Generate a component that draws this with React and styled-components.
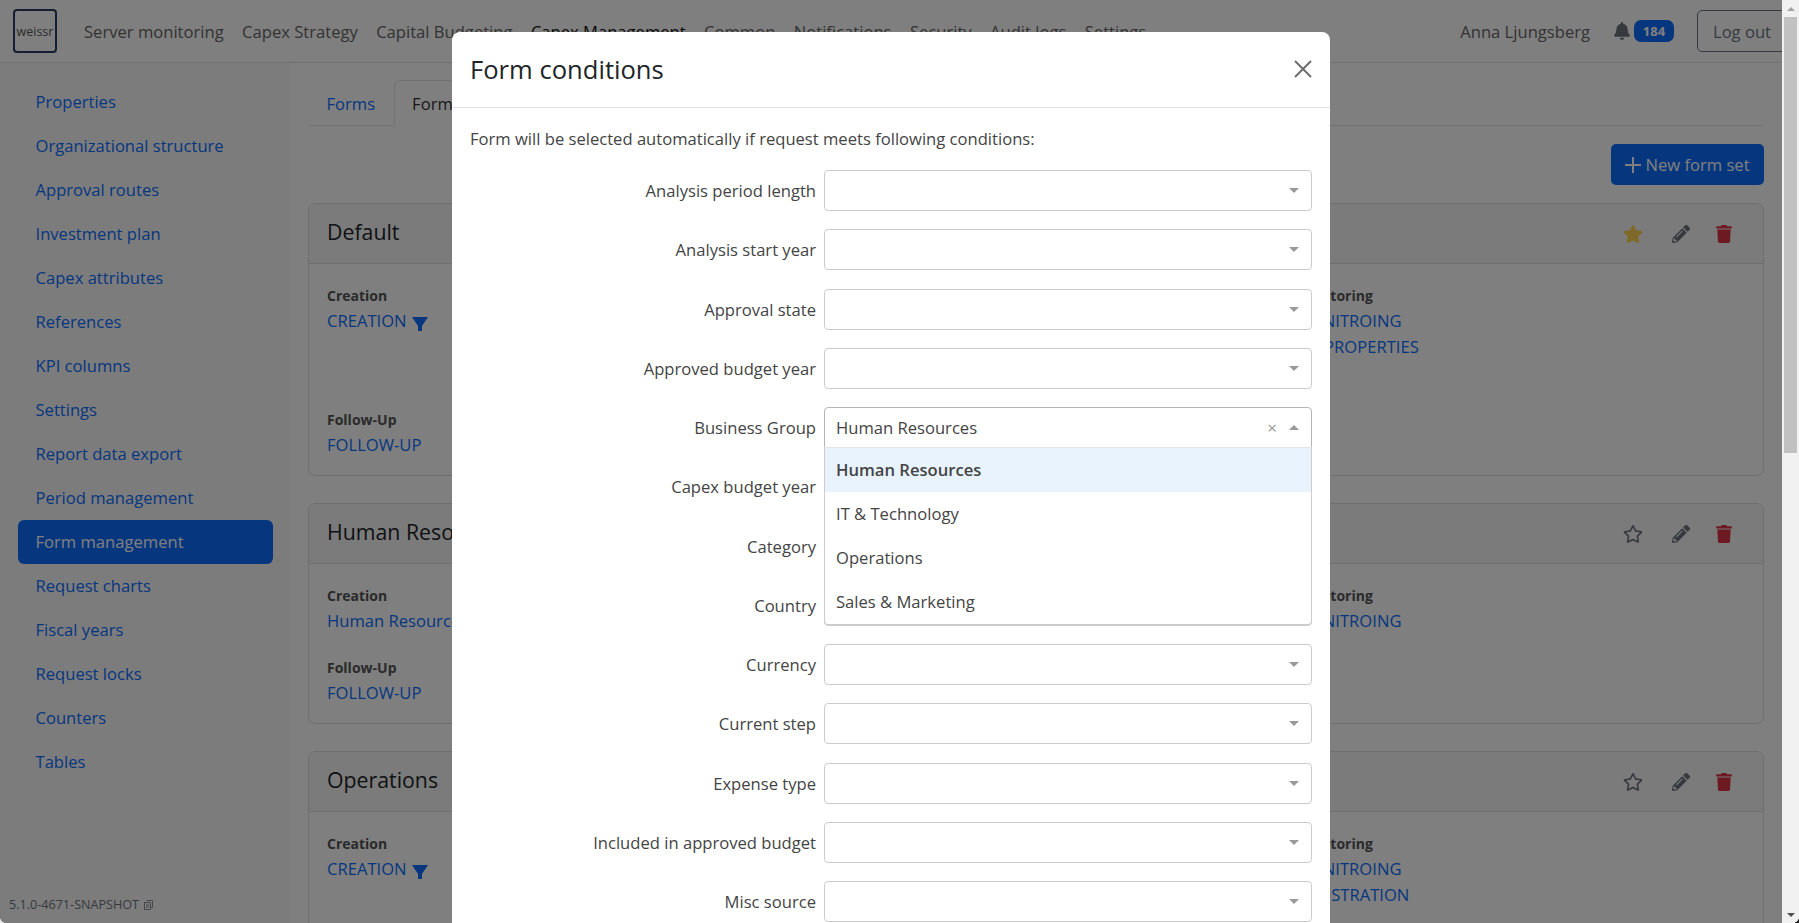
import React from 'react';
import styled, { createGlobalStyle } from 'styled-components';
import { FaBell, FaStar, FaRegStar, FaPencilAlt, FaTrash } from 'react-icons/fa';

const GlobalStyle = createGlobalStyle`
  html, body {
    margin: 0;
    height: 100%;
    overflow: hidden;
  }
  body {
    font-family: "Open Sans", "Liberation Sans", sans-serif;
    font-size: 16.6px;
    color: #212529;
    background: #fff;
  }
  * { box-sizing: border-box; }
`;

const Shell = styled.div`
  position: relative;
  display: flex;
  width: 1799px;
  height: 923px;
  overflow: hidden;
`;

const Page = styled.div`
  position: relative;
  flex: 1;
  min-width: 0;
  height: 923px;
  overflow: hidden;
  background: #fff;
`;

const Navbar = styled.nav`
  display: flex;
  align-items: center;
  height: 63px;
  padding: 0 0 0 13px;
  border-bottom: 1px solid #dee2e6;
`;

const Logo = styled.div`
  flex: 0 0 44px;
  height: 44px;
  margin-right: 27px;
  border: 2px solid #2d3c66;
  border-radius: 4px;
  font-size: 12.5px;
  display: flex;
  align-items: center;
  justify-content: center;
  color: #555;
`;

const NavLink = styled.a`
  margin-right: 18.4px;
  white-space: nowrap;
  color: ${p => (p.$active ? '#111' : '#666')};
`;

const UserBlock = styled.div`
  display: flex;
  align-items: center;
  margin-left: auto;
  margin-right: -5px;
`;

const UserName = styled.span`
  color: #666;
  margin-right: 23px;
`;

const BellIcon = styled(FaBell)`
  width: 18px;
  height: 18px;
  color: #6c757d;
  margin-right: 3px;
`;

const Badge = styled.span`
  width: 40px;
  height: 22px;
  margin-right: 23px;
  background: #0d6efd;
  border-radius: 7px;
  color: #fff;
  font-size: 13px;
  font-weight: 700;
  display: flex;
  align-items: center;
  justify-content: center;
`;

const LogoutButton = styled.button`
  width: 90px;
  height: 42px;
  padding: 0;
  background: transparent;
  border: 1px solid #6c757d;
  border-radius: 5px;
  color: #6c757d;
  font: inherit;
`;

const Columns = styled.div`
  display: flex;
  height: 860px;
`;

const Sidebar = styled.aside`
  flex: 0 0 291px;
  padding: 16.5px 18px 0 18px;
  background: #f8f9fa;
`;

const SideItem = styled.a`
  display: flex;
  align-items: center;
  height: 44px;
  padding-left: 17.5px;
  border-radius: 6px;
  color: ${p => (p.$active ? '#fff' : '#0d6efd')};
  background: ${p => (p.$active ? '#0d6efd' : 'transparent')};
`;

const Main = styled.main`
  flex: 1;
  min-width: 0;
  padding: 17px 18px 0 17px;
`;

const Tabs = styled.div`
  display: flex;
  height: 46px;
  border-bottom: 1px solid #dee2e6;
`;

const Tab = styled.a`
  height: 46px;
  padding: 0 17.5px;
  display: flex;
  align-items: center;
  color: ${p => (p.$active ? '#333' : '#0d6efd')};
  background: ${p => (p.$active ? '#fff' : 'transparent')};
  border: 1px solid ${p => (p.$active ? '#dee2e6' : 'transparent')};
  border-bottom-color: ${p => (p.$active ? '#fff' : 'transparent')};
  border-radius: 6px 6px 0 0;
`;

const Toolbar = styled.div`
  display: flex;
  justify-content: flex-end;
  padding: 18px 0;
`;

const PrimaryButton = styled.button`
  display: flex;
  align-items: center;
  gap: 4px;
  width: 153px;
  height: 41px;
  padding: 0;
  justify-content: center;
  background: #0d6efd;
  border: none;
  border-radius: 5px;
  color: #fff;
  font: inherit;
`;

const PlusIcon = styled.svg`
  width: 16px;
  height: 16px;
  stroke: #fff;
  stroke-width: 2;
`;

const Card = styled.section`
  border: 1px solid #dfdfdf;
  border-radius: 7px;
  margin-bottom: 27px;
  overflow: hidden;
`;

const CardHeader = styled.header`
  display: flex;
  align-items: center;
  height: 60px;
  padding: 0 30px 0 18px;
  background: #f7f7f7;
  border-bottom: 1px solid #dfdfdf;
`;

const CardTitle = styled.h3`
  flex: 1;
  margin: 0 0 4px;
  font-size: 21.3px;
  font-weight: 500;
`;

const CardActions = styled.div`
  display: flex;
  align-items: center;
`;

const ActionStar = styled.span`
  display: flex;
  margin-right: 29px;
  color: ${p => (p.$on ? '#ffd350' : '#6c757d')};
  font-size: 20px;
`;

const ActionPencil = styled.span`
  display: flex;
  margin-right: 25px;
  color: #6c757d;
  font-size: 18px;
`;

const ActionTrash = styled.span`
  display: flex;
  color: #dc3545;
  font-size: 18px;
`;

const CardBody = styled.div`
  display: grid;
  grid-template-columns: repeat(3, 1fr);
  grid-column-gap: 34px;
  grid-row-gap: 22px;
  padding: 20px 18px 17px 18px;
`;

const BlockLabel = styled.div`
  font-size: 14px;
  font-weight: 700;
  color: #555;
  line-height: 24px;
`;

const BlockLink = styled.a`
  display: flex;
  align-items: center;
  gap: 5px;
  line-height: 26px;
  white-space: nowrap;
  color: #0d6efd;
`;

const FunnelIcon = styled.svg`
  width: 16px;
  height: 14px;
  margin-top: 6px;
  fill: #0d6efd;
`;

const Version = styled.div`
  position: absolute;
  left: 9px;
  bottom: 10px;
  display: flex;
  align-items: center;
  gap: 5px;
  font-size: 12.6px;
  color: #6c757d;
`;

const CopyIcon = styled.svg`
  width: 9px;
  height: 10px;
  fill: none;
  stroke: #8a8f94;
  stroke-width: 1;
`;

const Backdrop = styled.div`
  position: absolute;
  inset: 0;
  background: rgba(0, 0, 0, 0.5);
`;

const Modal = styled.div`
  position: absolute;
  left: 452px;
  top: 32px;
  width: 878px;
  background: #fff;
  border-radius: 8px 8px 0 0;
`;

const ModalHeader = styled.div`
  display: flex;
  align-items: center;
  justify-content: space-between;
  height: 76px;
  padding: 0 17px 1px 18px;
  border-bottom: 1px solid #dee2e6;
`;

const ModalTitle = styled.h2`
  margin: 0;
  font-size: 25.6px;
  font-weight: 500;
  color: #212529;
`;

const CloseIcon = styled.svg`
  width: 20px;
  height: 20px;
  stroke: #6d6d6d;
  stroke-width: 2;
`;

const ModalBody = styled.div`
  padding: 18px 18px 0;
`;

const Intro = styled.p`
  margin: 0 0 18px;
  line-height: 26px;
  color: #444;
`;

const Row = styled.div`
  display: grid;
  grid-template-columns: 346px 1fr;
  grid-column-gap: 8px;
  align-items: center;
  margin-bottom: 18.25px;
`;

const RowLabel = styled.label`
  text-align: right;
  color: #444;
`;

const SelectWrap = styled.div`
  position: relative;
`;

const SelectBox = styled.div`
  display: flex;
  align-items: center;
  height: 41px;
  padding: 0 11px;
  border: 1px solid ${p => (p.$open ? '#b5b5b5' : '#ccc')};
  border-radius: ${p => (p.$open ? '4px 4px 0 0' : '4px')};
  color: #444;
`;

const SelectValue = styled.span`
  flex: 1;
`;

const ClearMark = styled.span`
  margin-right: 12px;
  font-size: 17px;
  color: #999;
`;

const Caret = styled.span`
  width: 0;
  height: 0;
  margin-right: 1px;
  border-left: 5px solid transparent;
  border-right: 5px solid transparent;
  border-top: ${p => (p.$up ? '0' : '5px solid #999')};
  border-bottom: ${p => (p.$up ? '5px solid #999' : '0')};
`;

const Dropdown = styled.div`
  position: absolute;
  left: 0;
  right: 0;
  top: 40px;
  background: #fff;
  border: 1px solid #ccc;
  border-top-color: #e6e6e6;
  border-radius: 0 0 4px 4px;
  z-index: 2;
`;

const Option = styled.div`
  display: flex;
  align-items: center;
  height: 44px;
  padding: 0 11px 1px;
  color: #444;
  font-weight: ${p => (p.$selected ? 600 : 400)};
  background: ${p => (p.$selected ? '#e8f3fd' : 'transparent')};
`;

const Scrollbar = styled.div`
  flex: 0 0 17px;
  display: flex;
  flex-direction: column;
  align-items: center;
  background: #f1f1f1;
`;

const ScrollArrow = styled.div`
  flex: 0 0 17px;
  display: flex;
  align-items: center;
  justify-content: center;
`;

const ScrollCaret = styled.span`
  width: 0;
  height: 0;
  border-left: 4px solid transparent;
  border-right: 4px solid transparent;
  border-top: ${p => (p.$up ? '0' : '4px solid #505050')};
  border-bottom: ${p => (p.$up ? '4px solid #a3a3a3' : '0')};
`;

const ScrollThumb = styled.div`
  width: 13px;
  height: 436px;
  background: #c1c1c1;
`;

const ScrollRest = styled.div`
  flex: 1;
`;

/* window corners that the screenshot caught */
const WindowCorner = styled.div`
  position: absolute;
  bottom: 0;
  ${p => (p.$right ? 'right: 0;' : 'left: 0;')}
  width: 7px;
  height: 7px;
  background: radial-gradient(circle at ${p => (p.$right ? '0 0' : '100% 0')}, transparent 7px, ${p => (p.$right ? '#222' : '#e8e8e8')} 7.5px);
`;

const navItems = ['Server monitoring', 'Capex Strategy', 'Capital Budgeting', 'Capex Management', 'Common', 'Notifications', 'Security', 'Audit logs', 'Settings'];

const sideItems = ['Properties', 'Organizational structure', 'Approval routes', 'Investment plan', 'Capex attributes', 'References', 'KPI columns', 'Settings', 'Report data export', 'Period management', 'Form management', 'Request charts', 'Fiscal years', 'Request locks', 'Counters', 'Tables'];

const cards = [
  { title: 'Default', starred: true, creation: 'CREATION', filter: true, approval: ['APPROVAL', 'BUDGET', 'KPI'], monitoring: ['MONITROING', 'KPI PROPERTIES'], followUp: 'FOLLOW-UP' },
  { title: 'Human Resources', creation: 'Human Resources', approval: ['APPROVAL'], monitoring: ['MONITROING'], followUp: 'FOLLOW-UP' },
  { title: 'Operations', creation: 'CREATION', filter: true, approval: ['APPROVAL', 'BUDGET', 'KPI'], monitoring: ['MONITROING', 'REGISTRATION'], followUp: 'FOLLOW-UP' },
];

const conditions = ['Analysis period length', 'Analysis start year', 'Approval state', 'Approved budget year', 'Business Group', 'Capex budget year', 'Category', 'Country', 'Currency', 'Current step', 'Expense type', 'Included in approved budget', 'Misc source'];

const groups = ['Human Resources', 'IT & Technology', 'Operations', 'Sales & Marketing'];

export default function App() {
  return (
    <Shell>
      <GlobalStyle />
      <Page>
        <Navbar>
          <Logo>weissr</Logo>
          {navItems.map(item => (
            <NavLink key={item} $active={item === 'Capex Management'}>{item}</NavLink>
          ))}
          <UserBlock>
            <UserName>Anna Ljungsberg</UserName>
            <BellIcon />
            <Badge>184</Badge>
            <LogoutButton>Log out</LogoutButton>
          </UserBlock>
        </Navbar>
        <Columns>
          <Sidebar>
            {sideItems.map(item => (
              <SideItem key={item} $active={item === 'Form management'}>{item}</SideItem>
            ))}
          </Sidebar>
          <Main>
            <Tabs>
              <Tab>Forms</Tab>
              <Tab $active>Form sets</Tab>
            </Tabs>
            <Toolbar>
              <PrimaryButton>
                <PlusIcon viewBox="0 0 16 16"><path d="M8 0 V16 M0 8 H16" /></PlusIcon>
                New form set
              </PrimaryButton>
            </Toolbar>
            {cards.map(card => (
              <Card key={card.title}>
                <CardHeader>
                  <CardTitle>{card.title}</CardTitle>
                  <CardActions>
                    <ActionStar $on={card.starred}>{card.starred ? <FaStar /> : <FaRegStar />}</ActionStar>
                    <ActionPencil><FaPencilAlt /></ActionPencil>
                    <ActionTrash><FaTrash /></ActionTrash>
                  </CardActions>
                </CardHeader>
                <CardBody>
                  <div>
                    <BlockLabel>Creation</BlockLabel>
                    <BlockLink>
                      {card.creation}
                      {card.filter && <FunnelIcon viewBox="0 0 16 14"><path d="M0 0 H16 L10 9 V14 H6 V9 Z" /></FunnelIcon>}
                    </BlockLink>
                  </div>
                  <div>
                    <BlockLabel>Approval</BlockLabel>
                    {card.approval.map(a => <BlockLink key={a}>{a}</BlockLink>)}
                  </div>
                  <div>
                    <BlockLabel>Monitoring</BlockLabel>
                    {card.monitoring.map(m => <BlockLink key={m}>{m}</BlockLink>)}
                  </div>
                  <div>
                    <BlockLabel>Follow-Up</BlockLabel>
                    <BlockLink>{card.followUp}</BlockLink>
                  </div>
                </CardBody>
              </Card>
            ))}
          </Main>
        </Columns>
        <Version>
          5.1.0-4671-SNAPSHOT
          <CopyIcon viewBox="0 0 9 10">
            <path d="M2.5 .5 H8.5 V7.5 H6.5 M.5 2.5 H6.5 V9.5 H.5 Z M2 5 H5 M2 7 H5" />
          </CopyIcon>
        </Version>
        <Backdrop />
        <Modal>
          <ModalHeader>
            <ModalTitle>Form conditions</ModalTitle>
            <CloseIcon viewBox="0 0 20 20"><path d="M2 2 L18 18 M18 2 L2 18" /></CloseIcon>
          </ModalHeader>
          <ModalBody>
            <Intro>Form will be selected automatically if request meets following conditions:</Intro>
            {conditions.map(label => {
              const open = label === 'Business Group';
              return (
                <Row key={label}>
                  <RowLabel>{label}</RowLabel>
                  <SelectWrap>
                    <SelectBox $open={open}>
                      <SelectValue>{open ? 'Human Resources' : ''}</SelectValue>
                      {open && <ClearMark>×</ClearMark>}
                      <Caret $up={open} />
                    </SelectBox>
                    {open && (
                      <Dropdown>
                        {groups.map((g, i) => <Option key={g} $selected={i === 0}>{g}</Option>)}
                      </Dropdown>
                    )}
                  </SelectWrap>
                </Row>
              );
            })}
          </ModalBody>
        </Modal>
      </Page>
      <Scrollbar>
        <ScrollArrow><ScrollCaret $up /></ScrollArrow>
        <ScrollThumb />
        <ScrollRest />
        <ScrollArrow><ScrollCaret /></ScrollArrow>
      </Scrollbar>
      <WindowCorner />
      <WindowCorner $right />
    </Shell>
  );
}
